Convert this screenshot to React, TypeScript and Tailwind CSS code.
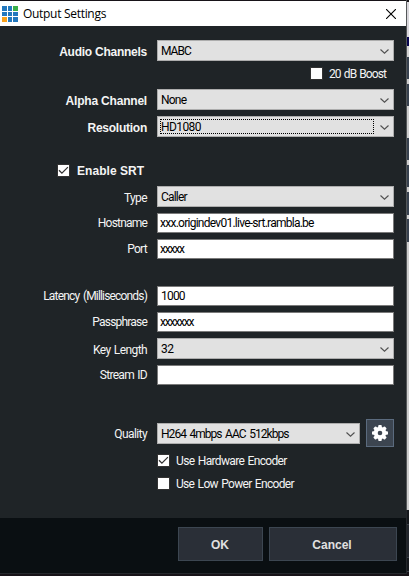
import clsx from 'clsx';

const strip = [
  { h: 'h-[2px]', c: 'bg-[#1b171c]' },
  { h: 'h-[35px]', c: 'bg-[#d9d7dc]' },
  { h: 'h-[9px]', c: 'bg-[#0a0750]' },
  { h: 'h-[11px]', c: 'bg-[#d3d3d3]' },
  { h: 'h-[22px]', c: 'bg-[#38424f]' },
  { h: 'h-[5px]', c: 'bg-[#cfcfcf]' },
  { h: 'h-[22px]', c: 'bg-[#38424f]' },
  { h: 'h-[32px]', c: 'bg-[#cfcfcf]' },
  { h: 'h-[22px]', c: 'bg-[#38424f]' },
  { h: 'h-[5px]', c: 'bg-[#cfcfcf]' },
  { h: 'h-[22px]', c: 'bg-[#38424f]' },
  { h: 'h-[5px]', c: 'bg-[#cfcfcf]' },
  { h: 'h-[23px]', c: 'bg-[#38424f]' },
  { h: 'h-[4px]', c: 'bg-[#cfcfcf]' },
  { h: 'h-[23px]', c: 'bg-[#38424f]' },
  { h: 'h-[268px]', c: 'bg-[#cfcfcf]' },
  { h: 'h-[14px]', c: 'bg-[#15181c]' },
  { h: 'h-[1px]', c: 'bg-[#3a4048]' },
  { h: 'h-[32px]', c: 'bg-[#22262c]' },
  { h: 'h-[1px]', c: 'bg-[#3a4048]' },
  { h: 'h-[13px]', c: 'bg-[#15181c]' },
  { h: 'h-[1px]', c: 'bg-[#3a4048]' },
  { h: 'h-[4px]', c: 'bg-[#171318]' }
];

function Chevron() {
  return (
    <svg className="ml-auto mr-1 mt-px h-[5px] w-[9px] shrink-0" viewBox="0 0 9 5" fill="none" stroke="#505050" strokeWidth="1.1">
      <path d="M.5 .5l4 3.7 4-3.7" />
    </svg>
  );
}

type RowProps = {
  label: string;
  value: string;
  select?: boolean;
  bold?: boolean;
  focused?: boolean;
  labelClass?: string;
  valueClass?: string;
  className?: string;
};

function Row({ label, value, select, bold, focused, labelClass, valueClass, className }: RowProps) {
  return (
    <div className={clsx('flex', select ? 'h-[22px]' : 'h-[20px]', className)}>
      <div
        className={clsx(
          'w-[147px] mr-[10px] text-right whitespace-nowrap text-[#f4f4f4]',
          select ? 'leading-[24px]' : 'leading-[20px]',
          bold && "font-bold font-['Liberation_Sans',sans-serif]",
          labelClass
        )}
      >
        {label}
      </div>
      <div
        className={clsx(
          'flex items-center w-[237px] border text-black whitespace-nowrap',
          select ? 'h-[21px] bg-[#e1e1e1] border-[#adadad]' : 'h-[20px] bg-white border-[#7a7a7a]'
        )}
      >
        {focused ? (
          <div className={clsx('w-[214px] h-[15px] ml-[2px] leading-[14px] border border-dotted border-black', valueClass)}>{value}</div>
        ) : (
          <div className={clsx('leading-[18px]', select ? 'pl-[3px] pt-px' : 'pl-[2px]', valueClass)}>{value}</div>
        )}
        {select && <Chevron />}
      </div>
    </div>
  );
}

function Check({ checked }: { checked?: boolean }) {
  return (
    <div className="w-[13px] h-[13px] shrink-0 border border-[#333] bg-white">
      {checked && (
        <svg className="block w-[11px] h-[11px]" viewBox="0 0 11 11" fill="none" stroke="#333" strokeWidth="1.3">
          <path d="M1 5.2l2.9 2.9 6-6" />
        </svg>
      )}
    </div>
  );
}

export default function App() {
  return (
    <div className="w-[409px] h-[576px] overflow-hidden flex bg-[#171318] text-[12px] font-['Roboto',sans-serif]">
      <div className="w-[406px] h-[574px] pt-[1px] flex flex-col">
        <div className="h-[25px] bg-white flex items-center shrink-0 text-black">
          <svg className="ml-[2px] w-[16px] h-[16px]" viewBox="0 0 16 16">
            <path fill="#2378be" d="M0 0h5v5H0zM6 0h4v5H6zM0 6h5v4H0zM6 6h4v4H6zM11 6h5v4h-5zM6 11h4v5H6zM11 11h5v5h-5z" />
            <path fill="#3aae49" d="M11 0h5v5h-5z" />
            <path fill="#f9a11b" d="M0 11h5v5H0z" />
          </svg>
          <span className="ml-[5px] font-['Open_Sans',sans-serif] leading-[18px] tracking-[-0.3px]">Output Settings</span>
          <svg className="ml-auto mr-[10px] w-[10px] h-[10px]" viewBox="0 0 10 10" stroke="#000" strokeWidth="1.1">
            <path d="M0 0l10 10M10 0L0 10" />
          </svg>
        </div>

        <div className="h-[492px] bg-[#1f2427] shrink-0 pt-[14px]">
          <Row select bold label="Audio Channels" value="MABC" labelClass="tracking-[-0.25px]" valueClass="tracking-[-1px]" />
          <div className="flex items-center h-[13px] mt-[5px] pl-[310px] text-[#f4f4f4] whitespace-nowrap">
            <Check />
            <span className="ml-[6px] tracking-[-0.9px] [word-spacing:1px]">20 dB Boost</span>
          </div>
          <Row select bold label="Alpha Channel" value="None" className="mt-[9px]" labelClass="tracking-[-0.2px]" valueClass="tracking-[-0.8px]" />
          <Row select bold focused label="Resolution" value="HD1080" className="mt-[5px]" labelClass="tracking-[-0.25px]" valueClass="tracking-[-0.6px]" />
          <div className="flex items-center h-[13px] mt-[26px] pl-[57px] text-[#f4f4f4] font-bold font-['Liberation_Sans',sans-serif]">
            <Check checked />
            <span className="ml-[7px] pt-px tracking-[0.05px]">Enable SRT</span>
          </div>
          <Row select label="Type" value="Caller" className="mt-[9px]" labelClass="tracking-[-0.6px]" valueClass="tracking-[-0.8px]" />
          <Row label="Hostname" value="xxx.origindev01.live-srt.rambla.be" className="mt-[5px]" labelClass="tracking-[-0.8px]" valueClass="tracking-[-0.74px]" />
          <Row label="Port" value="xxxxx" className="mt-[6px]" labelClass="tracking-[-0.7px]" valueClass="tracking-[-1.2px]" />
          <Row label="Latency (Milliseconds)" value="1000" className="mt-[27px]" labelClass="tracking-[-0.83px] [word-spacing:1.5px]" valueClass="pl-[3px]! tracking-[-0.8px]" />
          <Row label="Passphrase" value="xxxxxxx" className="mt-[6px]" labelClass="tracking-[-0.8px]" valueClass="tracking-[-1.2px]" />
          <Row select label="Key Length" value="32" className="mt-[6px]" labelClass="tracking-[-0.6px] [word-spacing:1px]" valueClass="tracking-[-0.5px]" />
          <Row label="Stream ID" value="" className="mt-[5px]" labelClass="tracking-[-0.7px] [word-spacing:1px]" />

          <div className="flex items-center mt-[34px] h-[28px]">
            <div className="w-[147px] mr-[10px] pt-px text-right text-[#f4f4f4] tracking-[-0.6px]">Quality</div>
            <div className="flex items-center w-[203px] h-[21px] mt-px border border-[#adadad] bg-[#e1e1e1] text-black whitespace-nowrap">
              <span className="pl-[3px] pt-px leading-[18px] tracking-[-0.96px] [word-spacing:1.5px]">H264 4mbps AAC 512kbps</span>
              <Chevron />
            </div>
            <div className="ml-[6px] w-[28px] h-[28px] border border-[#5b6b7e] bg-[#3c4550] flex items-center justify-center">
              <svg className="w-[16px] h-[16px]" viewBox="0 0 16 16">
                <g fill="#fff">
                  <rect x="6.2" width="3.6" height="16" rx="1" />
                  <rect y="6.2" width="16" height="3.6" rx="1" />
                  <rect x="6.2" width="3.6" height="16" rx="1" transform="rotate(45 8 8)" />
                  <rect x="6.2" width="3.6" height="16" rx="1" transform="rotate(-45 8 8)" />
                  <circle cx="8" cy="8" r="6.2" />
                </g>
                <circle cx="8" cy="8" r="2.3" fill="#3c4550" />
              </svg>
            </div>
          </div>
          <div className="flex items-center h-[13px] mt-[7px] pl-[157px] text-[#f4f4f4]">
            <Check checked />
            <span className="ml-[6px] pt-px tracking-[-0.65px] [word-spacing:1px]">Use Hardware Encoder</span>
          </div>
          <div className="flex items-center h-[13px] mt-[10px] pl-[157px] text-[#f4f4f4]">
            <Check />
            <span className="ml-[6px] pt-px tracking-[-0.68px] [word-spacing:1px]">Use Low Power Encoder</span>
          </div>
        </div>

        <div className="h-[55px] bg-[#0a0f12] shrink-0 pt-[9px] pl-[178px] flex gap-[6px] font-bold text-[#e0e0e0] font-['Liberation_Sans',sans-serif]">
          <div className="w-[85px] h-[34px] pt-px pr-px border border-[#3c4651] bg-[#2a2f37] flex items-center justify-center">OK</div>
          <div className="w-[128px] h-[34px] pt-px pr-[2px] border border-[#3c4651] bg-[#2a2f37] flex items-center justify-center">Cancel</div>
        </div>
        <div className="h-px bg-[#25282c] shrink-0" />
      </div>

      <div className="w-[1px] h-[574px] flex flex-col">
        <div className="h-[510px] bg-[#55585a]" />
        <div className="h-[64px] bg-[#25282c]" />
      </div>
      <div className="w-[2px] flex flex-col">
        {strip.map((s, i) => (
          <div key={i} className={clsx('shrink-0', s.h, s.c)} />
        ))}
      </div>
    </div>
  );
}
